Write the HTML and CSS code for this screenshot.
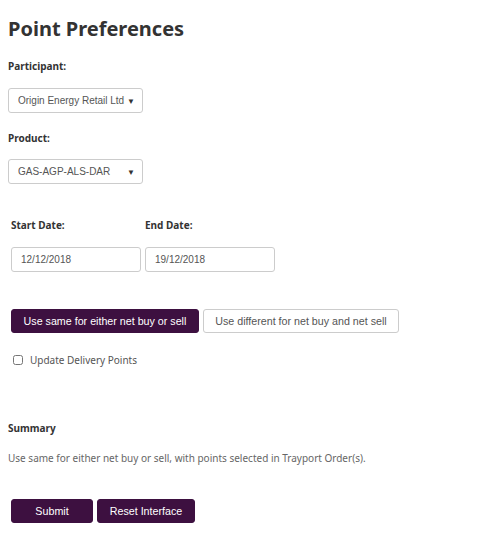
FILE: index.html
```html
<!DOCTYPE html>
<html lang="en">
<head>
  <meta charset="UTF-8">
  <title>Point Preferences</title>
  <link rel="stylesheet" href="styles.css">
</head>
<body>
  <form class="prefs">
    <h1>Point Preferences</h1>

    <label class="field-label" for="participant">Participant:</label>
    <div class="picker-wrap">
      <select id="participant" class="picker">
        <option>Origin Energy Retail Ltd</option>
      </select>
    </div>

    <label class="field-label label-product" for="product">Product:</label>
    <div class="picker-wrap picker-product">
      <select id="product" class="picker">
        <option>GAS-AGP-ALS-DAR</option>
      </select>
    </div>

    <div class="dates">
      <div class="date-col">
        <label class="field-label" for="start">Start Date:</label>
        <input type="text" id="start" class="date-input" value="12/12/2018">
      </div>
      <div class="date-col">
        <label class="field-label" for="end">End Date:</label>
        <input type="text" id="end" class="date-input" value="19/12/2018">
      </div>
    </div>

    <div class="mode-toggle">
      <button type="button" class="btn btn-dark btn-same">Use same for either net buy or sell</button>
      <button type="button" class="btn btn-light">Use different for net buy and net sell</button>
    </div>

    <label class="check-row">
      <input type="checkbox" class="check">
      <span>Update Delivery Points</span>
    </label>

    <h2 class="summary-title">Summary</h2>
    <p class="summary-text">Use same for either net buy or sell, with points selected in Trayport Order(s).</p>

    <div class="actions">
      <button type="submit" class="btn btn-dark btn-submit">Submit</button>
      <button type="reset" class="btn btn-dark btn-reset">Reset Interface</button>
    </div>
  </form>
</body>
</html>
```

FILE: styles.css
```css
* {
  margin: 0;
  padding: 0;
  box-sizing: border-box;
}

body {
  font-family: 'Noto Sans', 'Open Sans', sans-serif;
  background-color: #ffffff;
  color: #333;
  margin: 8px;
}

.prefs {
  display: flex;
  flex-direction: column;
  align-items: flex-start;
}

h1 {
  font-size: 20px;
  font-weight: 700;
  color: #333;
  margin-top: 8px;
  line-height: 26px;
}

.field-label {
  display: block;
  font-size: 10px;
  font-weight: 700;
  color: #333;
  line-height: 16px;
}

h1 + .field-label {
  margin-top: 16px;
}

/* select with a small custom arrow */
.picker-wrap {
  position: relative;
  margin-top: 14px;
}

.picker-wrap::after {
  content: '\25BC';
  position: absolute;
  right: 8px;
  top: 8px;
  font-size: 8px;
  line-height: 9px;
  color: #333;
  pointer-events: none;
}

.picker-product {
  margin-top: 13px;
}

.picker {
  display: block;
  appearance: none;
  -webkit-appearance: none;
  width: 135px;
  height: 25px;
  padding: 0 10px 0 9px;
  border: 1px solid #ccc;
  border-radius: 3px;
  background-color: #fff;
  font-family: 'Liberation Sans', Arial, sans-serif;
  font-size: 10px;
  color: #555;
}

.label-product {
  margin-top: 17px;
}

.dates {
  display: flex;
  gap: 4px;
  margin-top: 33px;
  padding-left: 3px;
}

.date-col {
  display: flex;
  flex-direction: column;
}

.date-input {
  width: 130px;
  height: 25px;
  margin-top: 14px;
  padding: 0 9px;
  border: 1px solid #ccc;
  border-radius: 3px;
  font-family: 'Liberation Sans', Arial, sans-serif;
  font-size: 10px;
  color: #555;
}

.mode-toggle {
  display: flex;
  gap: 4px;
  margin-top: 37px;
  padding-left: 3px;
}

.btn {
  height: 24px;
  padding: 0;
  border: 1px solid #3d1040;
  border-radius: 3px;
  font-family: 'Liberation Sans', Arial, sans-serif;
  font-size: 10.7px;
  text-align: center;
  cursor: pointer;
}

.btn-dark {
  background-color: #3d1040;
  color: #fff;
}

.btn-same {
  width: 188px;
}

.btn-light {
  background-color: #fff;
  border-color: #ccc;
  color: #555;
  width: 196px;
}

.check-row {
  display: flex;
  align-items: center;
  gap: 7px;
  height: 16px;
  margin-top: 19px;
  padding-left: 5px;
  font-size: 10px;
  color: #555;
}

.check {
  width: 10px;
  height: 10px;
}

.summary-title {
  font-size: 10px;
  font-weight: 700;
  color: #333;
  line-height: 16px;
  margin-top: 52px;
}

.summary-text {
  font-size: 10px;
  color: #666;
  line-height: 16px;
  margin-top: 14px;
}

.actions {
  display: flex;
  gap: 4px;
  margin-top: 33px;
  padding-left: 3px;
}

.btn-submit {
  width: 82px;
}

.btn-reset {
  width: 98px;
}
```
